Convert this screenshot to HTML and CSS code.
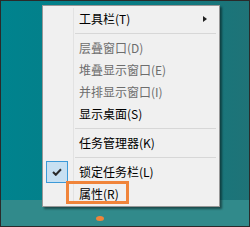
FILE: index.html
```html
<!DOCTYPE html>
<html lang="zh-CN">
<head>
<meta charset="utf-8">
<link rel="stylesheet" href="styles.css">
</head>
<body>
<div class="screen">
  <div class="desktop"></div>
  <div class="taskbar"><span class="dot"></span></div>
  <div class="menu">
    <div class="item"><span class="icon"></span><span class="label">工具栏(T)</span><span class="arrow"></span></div>
    <div class="sep"></div>
    <div class="item disabled"><span class="icon"></span><span class="label">层叠窗口(D)</span></div>
    <div class="item disabled"><span class="icon"></span><span class="label">堆叠显示窗口(E)</span></div>
    <div class="item disabled"><span class="icon"></span><span class="label">并排显示窗口(I)</span></div>
    <div class="item"><span class="icon"></span><span class="label">显示桌面(S)</span></div>
    <div class="sep"></div>
    <div class="item"><span class="icon"></span><span class="label">任务管理器(K)</span></div>
    <div class="sep"></div>
    <div class="item"><span class="icon checked"><svg width="10" height="8" viewBox="0 0 10 8"><path d="M1 4 L3.8 6.8 L9 1.2" fill="none" stroke="#2b2b2b" stroke-width="2"/></svg></span><span class="label">锁定任务栏(L)</span></div>
    <div class="item"><span class="icon"></span><span class="label">属性(R)</span></div>
    <div class="highlight"></div>
  </div>
</div>
</body>
</html>
```
FILE: styles.css
```css
html, body {
  margin: 0;
  padding: 0;
}
body {
  width: 250px;
  height: 227px;
  overflow: hidden;
  font-family: "Noto Sans CJK SC", "Noto Sans", sans-serif;
  font-size: 12px;
}
.screen {
  position: relative;
  width: 250px;
  height: 227px;
  box-sizing: border-box;
  border: 1px solid #2a2a2a;
  display: flex;
  flex-direction: column;
  background: #0b7f88;
}
.desktop {
  flex: 1;
  background: linear-gradient(90deg, #00838e 0%, #087c85 50%, #1f7377 100%);
}
.taskbar {
  height: 26px;
  background: #318a8b;
  display: flex;
  justify-content: center;
  position: relative;
}
.dot {
  position: absolute;
  left: 95px;
  top: 16px;
  width: 8px;
  height: 5px;
  border-radius: 50%;
  background: #f0843a;
}
.menu {
  position: absolute;
  left: 41px;
  top: 4px;
  width: 176px;
  padding: 2px 0 1px 0;
  background: #f0f0f0;
  border: 1px solid #979797;
  box-shadow: 2px 2px 2px rgba(0, 0, 0, 0.45);
}
.menu::before {
  content: "";
  position: absolute;
  left: 30px;
  top: 2px;
  bottom: 2px;
  width: 1px;
  background: #e2e2e2;
}
.item {
  height: 22px;
  display: flex;
  align-items: center;
  color: #000;
  line-height: 22px;
}
.item.disabled {
  color: #6d6d6d;
}
.icon {
  width: 36px;
  height: 22px;
  display: flex;
  align-items: center;
  padding-left: 3px;
  box-sizing: border-box;
  position: relative;
}
.icon.checked::before {
  content: "";
  position: absolute;
  left: 3px;
  top: 0;
  width: 20px;
  height: 20px;
  background: #c7e0f2;
  border: 1px solid #3c9ad8;
  z-index: 0;
}
.icon.checked svg {
  position: relative;
  z-index: 1;
  margin-left: 6px;
}
.label {
  flex: 1;
}
.arrow {
  width: 0;
  height: 0;
  border-top: 3.5px solid transparent;
  border-bottom: 3.5px solid transparent;
  border-left: 4px solid #202020;
  margin-right: 12px;
}
.sep {
  height: 7px;
  margin-left: 32px;
  margin-right: 3px;
  position: relative;
}
.sep::after {
  content: "";
  position: absolute;
  left: 0;
  right: 0;
  top: 3px;
  height: 1px;
  background: #d7d7d7;
}
.highlight {
  position: absolute;
  left: 23px;
  top: 175px;
  width: 57px;
  height: 17px;
  border: 3px solid #f0843a;
}
```
